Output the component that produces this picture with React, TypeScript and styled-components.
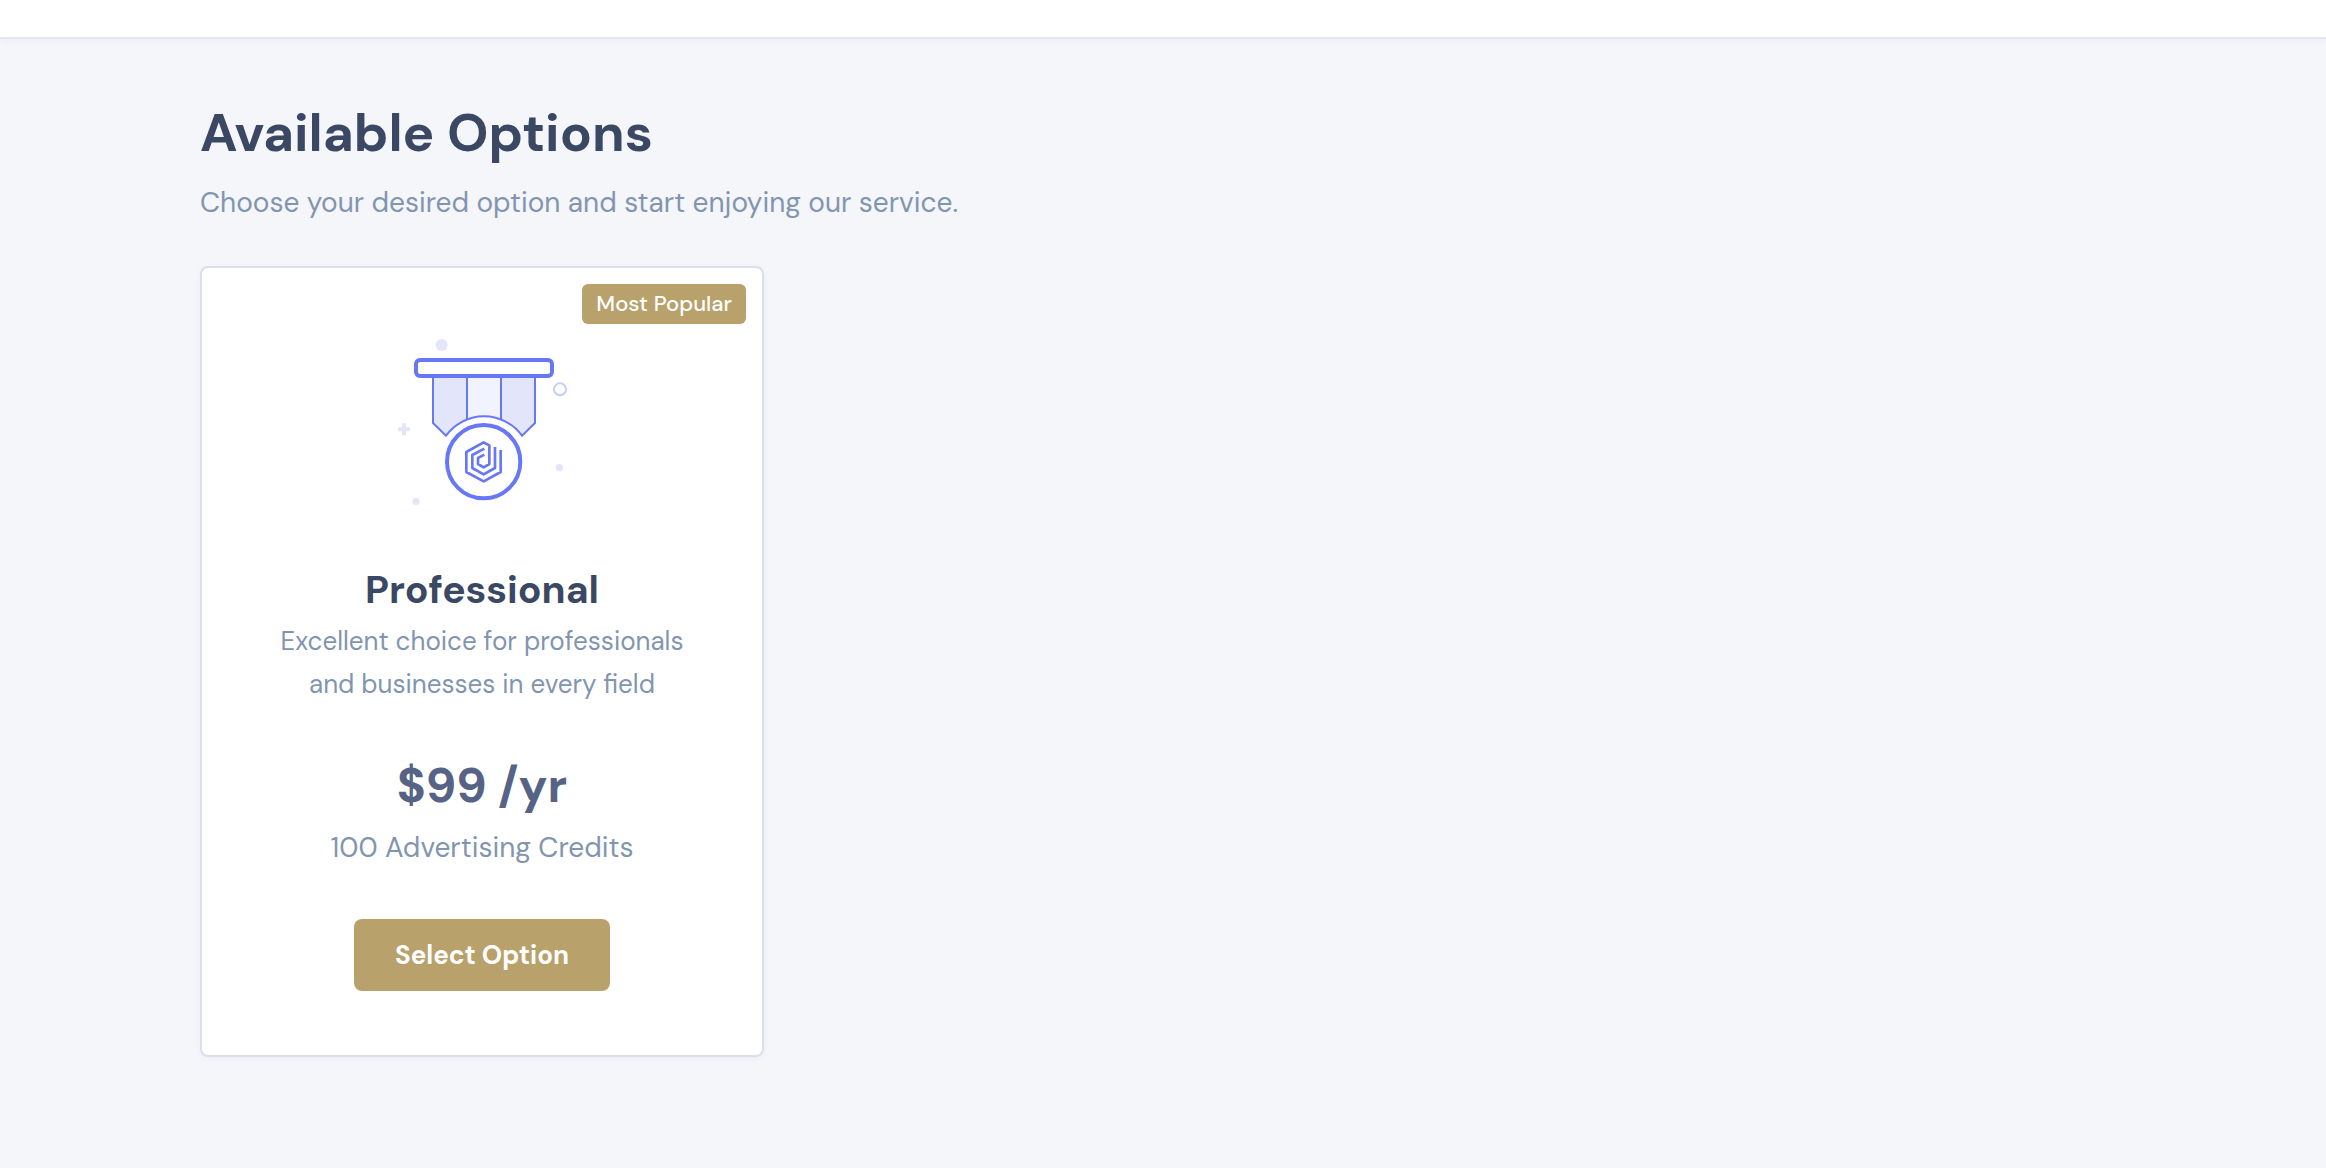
import React from "react";
import styled, { createGlobalStyle } from "styled-components";

const colors = {
  ink: "#3b4863",
  price: "#566384",
  muted: "#8295b0",
  gold: "#b9a16b",
  violet: "#6777f6",
  lilac: "#e3e5fb",
  line: "#dcdfeb",
  page: "#f5f6fa",
};

const GlobalStyle = createGlobalStyle`
  *, *::before, *::after { box-sizing: border-box; }
  html { background: ${colors.page}; }
  body {
    margin: 0;
    min-height: 100vh;
    color: ${colors.muted};
    background: ${colors.page};
    font-family: "DM Sans", Lato, "Noto Sans", sans-serif;
    -webkit-font-smoothing: antialiased;
  }
`;

const TopBar = styled.header`
  height: 39px;
  background: #fff;
  border-bottom: 2px solid #e4e6f1;
  box-shadow: 0 2px 6px rgba(90, 100, 160, 0.06);
`;

const Main = styled.main`
  padding: 60px 200px 112px;
`;

const Heading = styled.h1`
  margin: 0;
  font-size: 53px;
  line-height: 68px;
  font-weight: 700;
  color: ${colors.ink};
`;

const Lead = styled.p`
  margin: 15px 0 0;
  font-size: 28px;
  line-height: 42px;
`;

const Plans = styled.section`
  display: grid;
  grid-template-columns: repeat(auto-fill, minmax(min(564px, 100%), 564px));
  gap: 48px;
  margin-top: 42px;
`;

const Card = styled.article`
  position: relative;
  display: flex;
  flex-direction: column;
  align-items: center;
  padding: 52px 48px 64px;
  text-align: center;
  background: #fff;
  border: 2px solid ${colors.line};
  border-radius: 8px;
  box-shadow: 0 2px 6px rgba(90, 100, 160, 0.06);
`;

const Badge = styled.span`
  position: absolute;
  top: 16px;
  right: 16px;
  padding: 0 14px;
  font-size: 22px;
  line-height: 40px;
  font-weight: 500;
  color: #fff;
  background: ${colors.gold};
  border-radius: 6px;
`;

const Artwork = styled.svg`
  display: block;
  width: 210px;
  height: 200px;
`;

const PlanName = styled.h2`
  margin: 46px 0 0;
  font-size: 39px;
  line-height: 48px;
  font-weight: 700;
  color: ${colors.ink};
`;

const Description = styled.p`
  max-width: 420px;
  margin: 6px 0 0;
  font-size: 26px;
  line-height: 43px;
`;

const Price = styled.p`
  margin: 50px 0 0;
  font-size: 48px;
  line-height: 60px;
  font-weight: 700;
  color: ${colors.price};
`;

const Credits = styled.p`
  margin: 11px 0 0;
  font-size: 28px;
  line-height: 42px;
`;

const SelectButton = styled.button`
  min-width: 256px;
  height: 72px;
  margin-top: 50px;
  padding: 0 38px;
  font-family: inherit;
  font-size: 26px;
  font-weight: 700;
  color: #fff;
  background: ${colors.gold};
  border: 0;
  border-radius: 8px;
  cursor: pointer;
`;

function Medal() {
  return (
    <Artwork viewBox="-9 0 630 600" fill="none" aria-hidden="true">
      <g fill={colors.lilac}>
        <circle cx="185" cy="75" r="18" />
        <circle cx="538" cy="443" r="11" />
        <circle cx="108" cy="544" r="11" />
        <path d="M66 310h12v12h12v12H78v12H66v-12H54v-12h12z" />
      </g>
      <circle cx="540" cy="208" r="18" stroke="#c4cdfb" strokeWidth="6" />
      <path
        d="M159 170V309L198 347Q213 326 261 300V170zM363 170V300Q408 322 426 347L465 309V170z"
        fill={colors.lilac}
      />
      <path d="M261 170V300Q311 280 363 300V170z" fill="#f1f4fe" />
      <g stroke={colors.violet}>
        <path d="M261 170V299M363 170V299" strokeWidth="6" />
        <path
          d="M159 170V309L198 347A141 141 0 0 1 426 347L465 309V170"
          fill="none"
          strokeWidth="6"
        />
        <rect x="108" y="120" width="408" height="48" rx="12" fill="#fff" strokeWidth="12" />
        <circle cx="311" cy="425" r="110" fill="#fff" strokeWidth="12" />
        <path
          d="M362 390V456L311 484L259 456V396L311 367L328 376V432L311 442L294 432V414L313 404M345 381V444L311 463L277 444V405L313 386"
          strokeWidth="8"
          strokeLinejoin="round"
        />
      </g>
    </Artwork>
  );
}

export default function App() {
  return (
    <>
      <GlobalStyle />
      <TopBar />
      <Main>
        <Heading>Available Options</Heading>
        <Lead>Choose your desired option and start enjoying our service.</Lead>
        <Plans aria-label="Available options">
          <Card>
            <Badge>Most Popular</Badge>
            <Medal />
            <PlanName>Professional</PlanName>
            <Description>
              Excellent choice for professionals
              <br />
              and businesses in every field
            </Description>
            <Price>$99 /yr</Price>
            <Credits>100 Advertising Credits</Credits>
            <SelectButton type="button">Select Option</SelectButton>
          </Card>
        </Plans>
      </Main>
    </>
  );
}
